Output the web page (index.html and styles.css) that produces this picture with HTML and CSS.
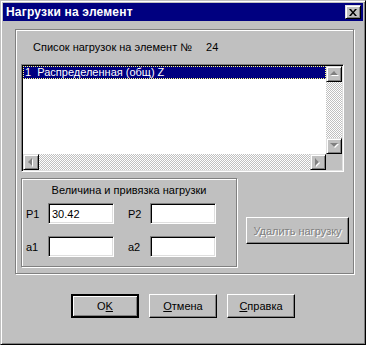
FILE: index.html
```html
<!doctype html>
<html lang="ru">
<head>
  <meta charset="UTF-8">
  <title>Нагрузки на элемент</title>
  <link rel="stylesheet" href="styles.css">
</head>
<body>

<div class="Window">
  <div class="Window-titlebar">
    <span class="Window-title">Нагрузки на элемент</span>
    <span class="Window-close">
      <svg width="8" height="7" viewBox="0 0 8 7"><path d="M0 0h2l2 2.5L6 0h2L5 3.5 8 7H6L4 4.5 2 7H0l3-3.5z" fill="#000"/></svg>
    </span>
  </div>

  <div class="Window-client">
    <div class="Frame">
      <div class="Frame-caption">Список нагрузок на элемент №<span class="Frame-number">24</span></div>

      <div class="ListBox">
        <div class="ListBox-rows">
          <div class="ListBox-row is-selected">1  Распределенная (общ) Z</div>
        </div>
        <div class="ScrollBar ScrollBar--vertical">
          <span class="ScrollBar-button">
            <svg width="9" height="6" viewBox="0 0 9 6"><polygon points="5,1 9,5 1,5" fill="#fff"/><polygon points="4,0 8,4 0,4" fill="#808080"/></svg>
          </span>
          <span class="ScrollBar-track"></span>
          <span class="ScrollBar-button">
            <svg width="9" height="6" viewBox="0 0 9 6"><polygon points="1,1 9,1 5,5" fill="#fff"/><polygon points="0,0 8,0 4,4" fill="#808080"/></svg>
          </span>
        </div>
        <div class="ScrollBar ScrollBar--horizontal">
          <span class="ScrollBar-button">
            <svg width="6" height="9" viewBox="0 0 6 9"><polygon points="5,1 5,9 1,5" fill="#fff"/><polygon points="4,0 4,8 0,4" fill="#808080"/></svg>
          </span>
          <span class="ScrollBar-track"></span>
          <span class="ScrollBar-button">
            <svg width="6" height="9" viewBox="0 0 6 9"><polygon points="1,1 5,5 1,9" fill="#fff"/><polygon points="0,0 4,4 0,8" fill="#808080"/></svg>
          </span>
        </div>
        <div class="ListBox-corner"></div>
      </div>

      <div class="Frame-lower">
        <div class="SubFrame">
          <div class="SubFrame-caption">Величина и привязка нагрузки</div>
          <div class="Fields">
            <label class="Fields-label">P1</label>
            <span class="Edit">30.42</span>
            <label class="Fields-label Fields-label--second">P2</label>
            <span class="Edit"></span>
            <label class="Fields-label">a1</label>
            <span class="Edit"></span>
            <label class="Fields-label Fields-label--second">a2</label>
            <span class="Edit"></span>
          </div>
        </div>
        <button class="Button Button--delete" disabled>Удалить нагрузку</button>
      </div>
    </div>

    <div class="Actions">
      <button class="Button Button--default">O<u>K</u></button>
      <button class="Button"><u>О</u>тмена</button>
      <button class="Button"><u>С</u>правка</button>
    </div>
  </div>
</div>

</body>
</html>
```

FILE: styles.css
```css
body {
  margin: 0;
  background-color: #c0c0c0;
  color: #000;
  font-family: "Liberation Sans", Arial, sans-serif;
  font-size: 11px;
}

.Window {
  display: flex;
  flex-direction: column;
  box-sizing: border-box;
  width: 366px;
  height: 345px;
  padding: 2px;
  border: 1px solid;
  border-color: #c0c0c0 #000 #000 #c0c0c0;
  box-shadow: inset 1px 1px #fff, inset -1px -1px #808080;
  background-color: #c0c0c0;
}

.Window-titlebar {
  display: flex;
  align-items: center;
  justify-content: space-between;
  height: 18px;
  padding: 0 2px 0 3px;
  background-color: #000080;
  color: #fff;
}

.Window-title {
  font-size: 12px;
  font-weight: bold;
  letter-spacing: 0.2px;
}

.Window-close,
.ScrollBar-button {
  display: flex;
  align-items: center;
  justify-content: center;
  box-sizing: border-box;
  border: 1px solid;
  border-color: #dfdfdf #000 #000 #dfdfdf;
  box-shadow: inset 1px 1px #fff, inset -1px -1px #808080;
  background-color: #c0c0c0;
}

.Window-close {
  width: 16px;
  height: 14px;
}

.Window-client {
  padding: 8px 0 0 12px;
}

/* etched group frame */
.Frame,
.SubFrame {
  box-sizing: border-box;
  border: 1px solid #808080;
  box-shadow: inset 1px 1px #fff, 1px 1px #fff;
}

.Frame {
  width: 339px;
  height: 245px;
  padding-left: 5px;
}

.Frame-caption {
  display: flex;
  align-items: center;
  height: 34px;
  padding-left: 12px;
}

.Frame-number {
  margin-left: 14px;
}

.ListBox {
  display: grid;
  grid-template-columns: 1fr 16px;
  grid-template-rows: 1fr 16px;
  box-sizing: border-box;
  width: 323px;
  height: 108px;
  padding: 1px;
  border: 1px solid;
  border-color: #808080 #fff #fff #808080;
  box-shadow: inset 1px 1px #000, inset -1px -1px #dfdfdf;
  background-color: #fff;
}

.ListBox-rows {
  overflow: hidden;
}

.ListBox-row {
  box-sizing: border-box;
  height: 13px;
  padding-left: 1px;
  line-height: 11px;
  white-space: pre;
}

.ListBox-row.is-selected {
  border: 1px dotted #ffff80;
  background-color: #000080;
  color: #fff;
}

.ListBox-corner {
  background-color: #c0c0c0;
}

.ScrollBar {
  display: flex;
}

.ScrollBar--vertical {
  flex-direction: column;
}

.ScrollBar-button {
  flex: 0 0 16px;
  width: 16px;
  height: 16px;
}

.ScrollBar-track {
  flex: 1;
  background: repeating-conic-gradient(#fff 0 25%, #c0c0c0 0 50%) 0 0 / 2px 2px;
}

.Frame-lower {
  display: flex;
  align-items: flex-start;
  margin-top: 6px;
}

.SubFrame {
  width: 216px;
  height: 89px;
  padding-top: 4px;
}

.SubFrame-caption {
  height: 14px;
  line-height: 14px;
  text-align: center;
}

.Fields {
  display: grid;
  grid-template-columns: 22px 66px 36px 66px;
  grid-auto-rows: 21px;
  row-gap: 12px;
  align-items: center;
  margin-top: 6px;
  padding-left: 4px;
}

.Fields-label--second {
  padding-left: 14px;
}

.Edit {
  box-sizing: border-box;
  height: 21px;
  padding: 3px 3px 0;
  border: 1px solid;
  border-color: #808080 #fff #fff #808080;
  box-shadow: inset 1px 1px #000, inset -1px -1px #dfdfdf;
  background-color: #fff;
  line-height: 14px;
}

.Button {
  box-sizing: border-box;
  width: 68px;
  height: 24px;
  padding: 0;
  border: 1px solid;
  border-color: #fff #000 #000 #fff;
  box-shadow: inset -1px -1px #808080;
  background-color: #c0c0c0;
  color: #000;
  font: inherit;
}

.Button--default {
  border: 2px solid #000;
  box-shadow: inset 1px 1px #fff, inset -1px -1px #808080;
}

.Button--delete {
  width: 103px;
  height: 27px;
  margin: 39px 0 0 9px;
  color: #808080;
  text-shadow: 1px 1px #fff;
}

.Actions {
  display: flex;
  justify-content: center;
  column-gap: 10px;
  margin: 20px 0 0 -12px;
}
```
